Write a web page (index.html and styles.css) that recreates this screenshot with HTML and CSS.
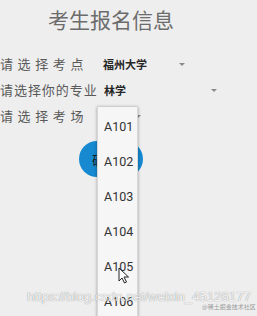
FILE: index.html
```html
<!DOCTYPE html>
<html lang="zh">
<head>
<meta charset="utf-8">
<title>考生报名信息</title>
<link rel="stylesheet" href="styles.css">
</head>
<body>
<div class="screen">
  <h1 class="title">考生报名信息</h1>
  <div class="form">
    <div class="row">
      <span class="label label-wide">请选择考点</span>
      <div class="spinner spinner-1"><span class="value">福州大学</span><span class="arrow"></span></div>
    </div>
    <div class="row">
      <span class="label label-tight">请选择你的专业</span>
      <div class="spinner spinner-2"><span class="value">林学</span><span class="arrow"></span></div>
    </div>
    <div class="row">
      <span class="label label-wide">请选择考场</span>
      <div class="spinner spinner-3"><span class="value"></span><span class="arrow"></span></div>
    </div>
    <button class="submit">确定</button>
  </div>

  <ul class="popup">
    <li>A101</li>
    <li>A102</li>
    <li>A103</li>
    <li>A104</li>
    <li>A105</li>
    <li>A106</li>
  </ul>

  <svg class="cursor" width="12" height="17" viewBox="0 0 12 17">
    <path d="M1 1 L1 14 L4 11 L6.5 16 L8.5 15 L6 10 L10.5 10 Z" fill="#fff" stroke="#222" stroke-width="1" stroke-linejoin="round"/>
  </svg>

  <div class="watermark">https://blog.csdn.net/weixin_45126177</div>
  <div class="credit">@稀土掘金技术社区</div>
</div>
</body>
</html>
```

FILE: styles.css
```css
* { box-sizing: border-box; }
html, body {
  margin: 0;
  padding: 0;
  background: #eeeeee;
}
body {
  font-family: "Noto Sans CJK SC", "Noto Sans", sans-serif;
}
.screen {
  position: relative;
  width: 257px;
  height: 316px;
  overflow: hidden;
  background: #eeeeee;
}
.title {
  margin: 6px 0 0 0;
  width: 222px;
  height: 26px;
  line-height: 26px;
  text-align: center;
  font-size: 21px;
  font-weight: normal;
  color: #6c6c6c;
}
.form {
  margin-top: 19px;
  display: flex;
  flex-direction: column;
}
.row {
  display: flex;
  align-items: center;
  height: 26px;
}
.label {
  font-size: 13px;
  color: #5a5a5a;
  white-space: nowrap;
  line-height: 26px;
}
.label-wide {
  width: 88px;
  letter-spacing: 4.6px;
}
.label-tight {
  width: 98px;
  letter-spacing: 0.95px;
}
.spinner {
  display: flex;
  align-items: center;
  justify-content: space-between;
  height: 26px;
}
.spinner-1 { margin-left: 15px; width: 84px; padding-right: 2px; }
.spinner-2 { margin-left: 6px; width: 116px; padding-right: 3px; }
.spinner-3 { margin-left: 9px; width: 47px; padding-right: 3px; }
.value {
  font-size: 11px;
  font-weight: bold;
  color: #262626;
}
.arrow {
  width: 0;
  height: 0;
  border-left: 3px solid transparent;
  border-right: 3px solid transparent;
  border-top: 3px solid #8a8a8a;
}
.submit {
  margin: 12px 0 0 79px;
  width: 64px;
  height: 36px;
  border: none;
  border-radius: 18px;
  background: #1689d1;
  color: #1a1a1a;
  font-family: "Noto Sans CJK SC", sans-serif;
  font-size: 13px;
  text-align: left;
  padding: 0 0 0 13px;
}
.popup {
  position: absolute;
  left: 97px;
  top: 107px;
  width: 41px;
  height: 230px;
  margin: 0;
  padding: 2px 0 0 0;
  list-style: none;
  background: #f6f6f6;
  box-shadow: 0 0 3px rgba(0,0,0,0.35), inset 1px 0 0 #d8d8d8, inset -1px 0 0 #d8d8d8;
}
.popup li {
  height: 35px;
  line-height: 35px;
  padding-left: 7px;
  font-family: Roboto, "Liberation Sans", sans-serif;
  font-size: 12.5px;
  color: #333;
}
.cursor {
  position: absolute;
  left: 118px;
  top: 267px;
}
.watermark {
  position: absolute;
  left: 27px;
  top: 289px;
  font-family: "Liberation Sans", Arial, sans-serif;
  font-size: 13.6px;
  letter-spacing: -0.2px;
  color: rgba(255,255,255,0.9);
  text-shadow: 0 0 1px rgba(0,0,0,0.5);
  white-space: nowrap;
}
.credit {
  position: absolute;
  left: 202px;
  top: 302px;
  font-size: 6px;
  color: #9a9a9a;
  white-space: nowrap;
}
```
